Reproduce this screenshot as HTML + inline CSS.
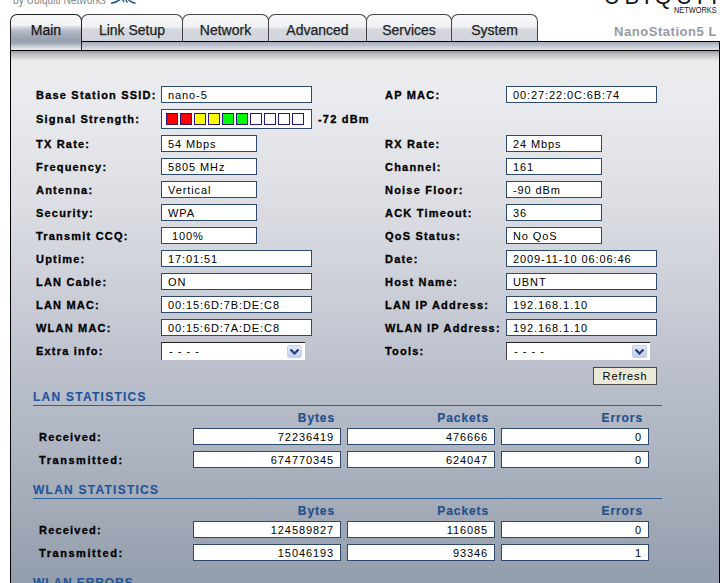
<!DOCTYPE html>
<html><head><meta charset="utf-8">
<style>
*{margin:0;padding:0;box-sizing:border-box}
html,body{width:722px;height:583px;overflow:hidden;background:#fff;font-family:"Liberation Sans",sans-serif}
.a{position:absolute;white-space:nowrap}
#frame{position:absolute;left:10px;top:41px;width:710px;height:560px;border-left:1px solid #000;border-right:1px solid #000;border-top:1px solid #000;
 background:linear-gradient(#ececef 0px,#ebebee 18px,#e9eaed 63px,#dcdee3 158px,#cacdd6 258px,#b9becb 340px,#aeb4c1 408px,#a0a8b6 480px,#969fae 530px,#939cab 560px)}
#strip{position:absolute;left:0;top:0;width:708px;height:9px;background:linear-gradient(#a3aab9,#c2c7d1 50%,#e2e5ea);border-bottom:1px solid #000}
#shade{position:absolute;left:0;top:9px;width:708px;height:10px;background:linear-gradient(rgba(155,155,155,1),rgba(185,185,187,0.85) 35%,rgba(236,236,239,0))}
.tab{position:absolute;top:14px;height:27px;border:1px solid #444;border-bottom:none;border-radius:7px 7px 0 0;
 background:linear-gradient(#f8f8f9 0px,#f0f1f3 12px,#d5d8de 14.5px,#d2d6dc 26px);
 font-size:14px;letter-spacing:0px;color:#222;-webkit-text-stroke:0.25px #222;text-align:center;line-height:30px}
.tab.on{height:36px;border-color:#222;background:linear-gradient(#f8f8f9 0px,#f2f3f5 10px,#cdd1d8 13px,#b4bac5 16px,#a5acba 20px,#9aa1b0 24px,#9ca3b2 28px,#c5cad3 31px,#e3e6ea 34px);color:#111;z-index:2}
.lbl{position:absolute;font-size:11px;font-weight:bold;color:#000;white-space:nowrap;letter-spacing:1.2px;-webkit-text-stroke:0.3px #000}
.inp{position:absolute;height:17px;border:1px solid #2d4a6c;background:#fff;font-size:11px;padding-left:6px;padding-top:1px;line-height:15px;white-space:nowrap;color:#000;letter-spacing:0.9px}
.w1{width:151px}.w2{width:96px}
.sec{position:absolute;left:33px;font-size:12px;font-weight:bold;color:#22549a;white-space:nowrap;letter-spacing:1.25px;line-height:15px;-webkit-text-stroke:0.15px #22549a}
.line{position:absolute;left:33px;width:629px;height:1px;background:#30609a}
.hd{position:absolute;font-size:12px;font-weight:bold;color:#26508a;-webkit-text-stroke:0.2px #26508a;text-align:right;white-space:nowrap;padding-right:6px;letter-spacing:0.9px;line-height:14px}
.num{position:absolute;height:17px;width:148px;border:1px solid #2d4a6c;background:#fff;font-size:11px;text-align:right;padding-right:6px;padding-top:1px;line-height:15px;letter-spacing:0.9px}
.sq{position:absolute;top:3px;width:12px;height:12px;border:1px solid #2a1480}
.sel{position:absolute;width:144px;height:18px;background:#fff;border-top:1px solid #222;border-left:1px solid #444;font-size:11px;line-height:16px;padding-left:7px;letter-spacing:1px}
.sel .btn{position:absolute;right:3px;top:2px;width:15px;height:13px;border-radius:2px;background:linear-gradient(#e0e8fa,#c0cef2);border:1px solid #c5d0ec}
.sel .btn svg{position:absolute;left:-1px;top:-1px}
.refresh{position:absolute;left:593px;top:367px;width:64px;height:18px;border:1px solid #4a4a4a;background:#ece9d8;font-size:11px;text-align:center;line-height:16px;letter-spacing:0.9px}

</style></head><body>
<div class="a" style="left:13px;top:-7px;font-size:12px;color:#8a8a8a;transform:scaleX(0.85);transform-origin:0 0">by Ubiquiti Networks</div>
<svg class="a" style="left:108px;top:0" width="30" height="6" viewBox="0 0 30 6"><path d="M3 3.2 Q8 2.6 12 -0.5" fill="none" stroke="#1d5a86" stroke-width="1.6"/><path d="M14.5 -0.5 L16 2.2 M17.5 -0.5 L19.5 2.6" fill="none" stroke="#1d5a86" stroke-width="1.3"/><path d="M20 -0.5 Q23 2.4 27.5 3.2" fill="none" stroke="#1d5a86" stroke-width="1.6"/></svg>
<div class="a" style="left:604px;top:-16px;font-size:22px;color:#111;letter-spacing:4.6px">UBIQUITI</div>
<div class="a" style="left:674px;top:5px;font-size:9px;color:#111;transform:scaleX(0.82);transform-origin:0 0">NETWORKS</div>
<div class="a" style="left:614px;top:24px;font-size:13px;font-weight:bold;color:#959aa3;letter-spacing:0.55px">NanoStation5 L</div>
<div id="frame"><div id="strip"></div><div id="shade"></div></div>
<div class="tab on" style="left:10px;width:72px">Main</div>
<div class="tab" style="left:81px;width:102px">Link Setup</div>
<div class="tab" style="left:182px;width:87px">Network</div>
<div class="tab" style="left:268px;width:99px">Advanced</div>
<div class="tab" style="left:366px;width:86px">Services</div>
<div class="tab" style="left:451px;width:87px">System</div>

<div class="lbl" style="left:36px;top:89px">Base Station SSID:</div>
<div class="inp w1" style="left:161px;top:86px">nano-5</div>
<div class="lbl" style="left:36px;top:113px">Signal Strength:</div>
<div class="inp w1" style="left:161px;top:109px;height:20px"><div class="sq" style="left:4px;background:#f00"></div><div class="sq" style="left:18px;background:#f00"></div><div class="sq" style="left:32px;background:#ff0"></div><div class="sq" style="left:46px;background:#ff0"></div><div class="sq" style="left:60px;background:#0f0"></div><div class="sq" style="left:74px;background:#0f0"></div><div class="sq" style="left:88px;background:#fff"></div><div class="sq" style="left:102px;background:#fff"></div><div class="sq" style="left:116px;background:#fff"></div><div class="sq" style="left:130px;background:#fff"></div></div>
<div class="lbl" style="left:318px;top:113px">-72 dBm</div>
<div class="lbl" style="left:36px;top:138px">TX Rate:</div>
<div class="inp w2" style="left:161px;top:135px">54 Mbps</div>
<div class="lbl" style="left:36px;top:161px">Frequency:</div>
<div class="inp w2" style="left:161px;top:158px">5805 MHz</div>
<div class="lbl" style="left:36px;top:184px">Antenna:</div>
<div class="inp w2" style="left:161px;top:181px">Vertical</div>
<div class="lbl" style="left:36px;top:207px">Security:</div>
<div class="inp w2" style="left:161px;top:204px">WPA</div>
<div class="lbl" style="left:36px;top:230px">Transmit CCQ:</div>
<div class="inp w2" style="left:161px;top:227px">&nbsp;100%</div>
<div class="lbl" style="left:36px;top:253px">Uptime:</div>
<div class="inp w1" style="left:161px;top:250px">17:01:51</div>
<div class="lbl" style="left:36px;top:276px">LAN Cable:</div>
<div class="inp w1" style="left:161px;top:273px">ON</div>
<div class="lbl" style="left:36px;top:299px">LAN MAC:</div>
<div class="inp w1" style="left:161px;top:296px">00:15:6D:7B:DE:C8</div>
<div class="lbl" style="left:36px;top:322px">WLAN MAC:</div>
<div class="inp w1" style="left:161px;top:319px">00:15:6D:7A:DE:C8</div>
<div class="lbl" style="left:36px;top:345px">Extra info:</div>
<div class="sel" style="left:161px;top:342px"><span>- - - -</span><div class="btn"><svg width="15" height="13" viewBox="0 0 15 13"><path d="M3.5 4.5 L7.5 8.5 L11.5 4.5" fill="none" stroke="#283c6a" stroke-width="2.2"/></svg></div></div>
<div class="lbl" style="left:385px;top:89px">AP MAC:</div>
<div class="inp w1" style="left:506px;top:86px">00:27:22:0C:6B:74</div>
<div class="lbl" style="left:385px;top:138px">RX Rate:</div>
<div class="inp w2" style="left:506px;top:135px">24 Mbps</div>
<div class="lbl" style="left:385px;top:161px">Channel:</div>
<div class="inp w2" style="left:506px;top:158px">161</div>
<div class="lbl" style="left:385px;top:184px">Noise Floor:</div>
<div class="inp w2" style="left:506px;top:181px">-90 dBm</div>
<div class="lbl" style="left:385px;top:207px">ACK Timeout:</div>
<div class="inp w2" style="left:506px;top:204px">36</div>
<div class="lbl" style="left:385px;top:230px">QoS Status:</div>
<div class="inp w2" style="left:506px;top:227px">No QoS</div>
<div class="lbl" style="left:385px;top:253px">Date:</div>
<div class="inp w1" style="left:506px;top:250px">2009-11-10 06:06:46</div>
<div class="lbl" style="left:385px;top:276px">Host Name:</div>
<div class="inp w1" style="left:506px;top:273px">UBNT</div>
<div class="lbl" style="left:385px;top:299px">LAN IP Address:</div>
<div class="inp w1" style="left:506px;top:296px">192.168.1.10</div>
<div class="lbl" style="left:385px;top:322px">WLAN IP Address:</div>
<div class="inp w1" style="left:506px;top:319px">192.168.1.10</div>
<div class="lbl" style="left:385px;top:345px">Tools:</div>
<div class="sel" style="left:506px;top:342px"><span>- - - -</span><div class="btn"><svg width="15" height="13" viewBox="0 0 15 13"><path d="M3.5 4.5 L7.5 8.5 L11.5 4.5" fill="none" stroke="#283c6a" stroke-width="2.2"/></svg></div></div>
<div class="refresh">Refresh</div>
<div class="sec" style="top:390px">LAN STATISTICS</div>
<div class="line" style="top:405px"></div>
<div class="hd" style="left:193px;top:411px;width:148px">Bytes</div>
<div class="hd" style="left:347px;top:411px;width:148px">Packets</div>
<div class="hd" style="left:501px;top:411px;width:148px">Errors</div>
<div class="lbl" style="left:39px;top:431px">Received:</div>
<div class="num" style="left:193px;top:428px">72236419</div>
<div class="num" style="left:347px;top:428px">476666</div>
<div class="num" style="left:501px;top:428px">0</div>
<div class="lbl" style="left:39px;top:454px;letter-spacing:1.55px">Transmitted:</div>
<div class="num" style="left:193px;top:451px">674770345</div>
<div class="num" style="left:347px;top:451px">624047</div>
<div class="num" style="left:501px;top:451px">0</div>
<div class="sec" style="top:483px">WLAN STATISTICS</div>
<div class="line" style="top:498px"></div>
<div class="hd" style="left:193px;top:504px;width:148px">Bytes</div>
<div class="hd" style="left:347px;top:504px;width:148px">Packets</div>
<div class="hd" style="left:501px;top:504px;width:148px">Errors</div>
<div class="lbl" style="left:39px;top:524px">Received:</div>
<div class="num" style="left:193px;top:521px">124589827</div>
<div class="num" style="left:347px;top:521px">116085</div>
<div class="num" style="left:501px;top:521px">0</div>
<div class="lbl" style="left:39px;top:547px;letter-spacing:1.55px">Transmitted:</div>
<div class="num" style="left:193px;top:544px">15046193</div>
<div class="num" style="left:347px;top:544px">93346</div>
<div class="num" style="left:501px;top:544px">1</div>
<div class="sec" style="top:576px;letter-spacing:0.9px">WLAN ERRORS</div>
</body></html>
